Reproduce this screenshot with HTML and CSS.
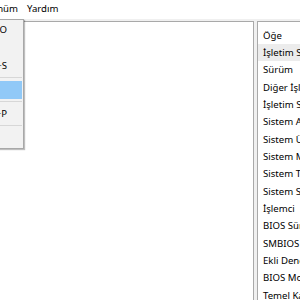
FILE: index.html
```html
<!DOCTYPE html>
<html lang="tr">
<head>
<meta charset="utf-8">
<title>Sistem Bilgileri</title>
<link rel="stylesheet" href="styles.css">
</head>
<body>
<div class="window">
  <div class="menubar">
    <div class="menu-item clip"><span>Görünüm</span></div>
    <div class="menu-item">Yardım</div>
  </div>
  <div class="panes">
    <div class="tree-pane"></div>
    <div class="list-pane">
      <div class="list-header">Öğe</div>
      <div class="row selected">İşletim Sistemi Adı</div>
      <div class="row">Sürüm</div>
      <div class="row">Diğer İşletim Sistemi Açıklaması</div>
      <div class="row">İşletim Sistemi Üreticisi</div>
      <div class="row">Sistem Adı</div>
      <div class="row">Sistem Üreticisi</div>
      <div class="row">Sistem Modeli</div>
      <div class="row">Sistem Türü</div>
      <div class="row">Sistem SKU'su</div>
      <div class="row">İşlemci</div>
      <div class="row">BIOS Sürümü/Tarihi</div>
      <div class="row">SMBIOS Sürümü</div>
      <div class="row">Ekli Denetleyici Sürümü</div>
      <div class="row">BIOS Modu</div>
      <div class="row">Temel Kart Üreticisi</div>
    </div>
  </div>
  <div class="dropdown">
    <div class="dd-item"><span class="dd-label">Aç...</span><span class="dd-key">Ctrl+O</span></div>
    <div class="dd-item"><span class="dd-label">Kapat</span><span class="dd-key"></span></div>
    <div class="dd-item"><span class="dd-label">Kaydet</span><span class="dd-key">Ctrl+S</span></div>
    <div class="dd-sep"></div>
    <div class="dd-item hot"><span class="dd-label">Dışa Aktar...</span><span class="dd-key"></span></div>
    <div class="dd-sep"></div>
    <div class="dd-item"><span class="dd-label">Yazdır...</span><span class="dd-key">Ctrl+P</span></div>
    <div class="dd-sep"></div>
    <div class="dd-item"><span class="dd-label">Çıkış</span><span class="dd-key"></span></div>
  </div>
</div>
</body>
</html>
```

FILE: styles.css
```css
html, body {
  margin: 0;
  padding: 0;
}
body {
  width: 300px;
  height: 300px;
  overflow: hidden;
  background: #f0f0f0;
  font-family: "Noto Sans", "Open Sans", sans-serif;
  font-size: 9.6px;
  color: #000;
}
.window {
  position: relative;
  width: 300px;
  height: 300px;
}
.menubar {
  height: 19px;
  line-height: 18px;
  background: #fff;
  display: flex;
  white-space: nowrap;
}
.menu-item {
  flex: none;
}
.menu-item.clip {
  width: 18px;
  overflow: hidden;
  display: flex;
  justify-content: flex-end;
}
.menu-item.clip + .menu-item {
  margin-left: 9px;
}
.panes {
  margin-top: 2px;
  display: flex;
  height: 279px;
}
.tree-pane {
  flex: none;
  width: 253px;
  background: #fff;
  border-top: 1px solid #a9a9a9;
  border-right: 1px solid #a9a9a9;
}
.list-pane {
  flex: 1;
  margin-left: 3px;
  background: #fff;
  border-top: 1px solid #a9a9a9;
  border-left: 1px solid #a9a9a9;
  white-space: nowrap;
  overflow: hidden;
}
.list-header {
  padding: 5px 0 0 5px;
  height: 17px;
  line-height: 17px;
}
.row {
  height: 17.33px;
  line-height: 17.33px;
  padding-left: 5px;
}
.row.selected {
  background: #ececec;
}
.dropdown {
  position: absolute;
  top: 19px;
  left: -200px;
  width: 222px;
  padding: 1px 0;
  background: #f2f2f2;
  border: 1px solid #a8a8a8;
  box-shadow: 1px 1px 1px rgba(0,0,0,0.25);
  white-space: nowrap;
}
.dd-item {
  height: 18px;
  line-height: 18px;
  margin: 0 1px 0 2px;
  display: flex;
  justify-content: space-between;
  padding: 0 15px 0 30px;
}
.dd-item.hot {
  background: #91c9f7;
}
.dd-sep {
  height: 1px;
  margin: 2px 1px 3px 30px;
  background: #d7d7d7;
}
```
